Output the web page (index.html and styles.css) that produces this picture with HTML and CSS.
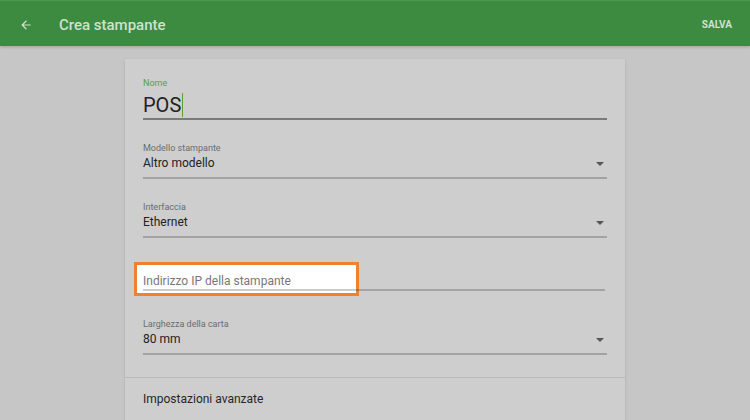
FILE: index.html
```html
<!DOCTYPE html>
<html lang="it">
<head>
    <meta charset="UTF-8">
    <meta name="viewport" content="width=device-width, initial-scale=1.0">
    <title>Crea stampante</title>
    <link rel="stylesheet" href="styles.css">
</head>
<body>
    <header class="toolbar">
        <span class="back">
            <svg width="14" height="14" viewBox="0 0 24 24"><path d="M20 11H7.83l5.59-5.59L12 4l-8 8 8 8 1.41-1.41L7.83 13H20v-2z" fill="currentColor"/></svg>
        </span>
        <h1>Crea stampante</h1>
        <span class="save">SALVA</span>
    </header>
    <main>
        <section class="card">
            <div class="fields">
                <div class="field field-name">
                    <label>Nome</label>
                    <div class="value">POS<span class="caret"></span></div>
                </div>
                <div class="field select">
                    <label>Modello stampante</label>
                    <div class="value">Altro modello<span class="arrow"></span></div>
                </div>
                <div class="field select">
                    <label>Interfaccia</label>
                    <div class="value">Ethernet<span class="arrow"></span></div>
                </div>
                <div class="field field-ip">
                    <span class="highlight"></span>
                    <div class="value placeholder">Indirizzo IP della stampante</div>
                </div>
                <div class="field select field-paper">
                    <label>Larghezza della carta</label>
                    <div class="value">80 mm<span class="arrow"></span></div>
                </div>
            </div>
            <div class="row">Impostazioni avanzate</div>
        </section>
    </main>
</body>
</html>
```

FILE: styles.css
```css
body {
    margin: 0;
    font-family: Roboto, "Noto Sans", sans-serif;
    background: #c6c6c6;
    height: 420px;
    overflow: hidden;
}
.toolbar {
    box-sizing: border-box;
    height: 46px;
    background: #3d8b40;
    border-top: 1px solid #4a9a4d;
    color: rgba(255, 255, 255, 0.75);
    display: flex;
    align-items: center;
    padding: 2px 18px 0 19px;
    box-shadow: 0 1px 3px rgba(0, 0, 0, 0.2);
}
.back {
    display: flex;
    width: 14px;
    height: 14px;
}
.toolbar h1 {
    flex: 1;
    margin: 0 0 0 26px;
    font-size: 15px;
    font-weight: 500;
}
.save {
    font-size: 10px;
    font-weight: 700;
}
main {
    padding-top: 13px;
}
.card {
    width: 500px;
    margin: 0 auto;
    padding-bottom: 2px;
    background: #cecece;
    box-shadow: 0 1px 3px rgba(0, 0, 0, 0.12);
}
.fields {
    padding: 18px 18px 22px;
}
.field {
    position: relative;
    margin-top: 22px;
}
.field:first-child {
    margin-top: 0;
}
.field label {
    display: block;
    font-size: 9px;
    line-height: 12px;
    color: #6c6c6c;
}
.field .value {
    position: relative;
    font-size: 12px;
    line-height: 16px;
    color: #222;
    padding: 1px 0 6px;
    border-bottom: 2px solid #a3a3a3;
}
.field-name label {
    color: #5e9e3a;
}
.field-name .value {
    font-size: 20px;
    line-height: 26px;
    padding: 3px 0 0;
    border-bottom-color: #7a7a7a;
}
.caret {
    display: inline-block;
    width: 1px;
    height: 24px;
    background: #5e9e3a;
    vertical-align: -5px;
    margin-left: 1px;
}
.arrow {
    position: absolute;
    right: 3px;
    top: 8px;
    border-left: 4px solid transparent;
    border-right: 4px solid transparent;
    border-top: 4px solid #555;
}
.field-ip {
    margin-top: 35px;
}
.field-ip .value {
    z-index: 1;
    font-size: 12px;
    color: #777;
    width: 462px;
    padding: 0;
    border-bottom: 2px solid rgba(0, 0, 0, 0.2);
}
.highlight {
    position: absolute;
    left: -9px;
    top: -11px;
    width: 219px;
    height: 28px;
    background: #fff;
    border: 3px solid #f0812f;
}
.field-paper {
    margin-top: 27px;
}
.row {
    border-top: 1px solid #bababa;
    border-bottom: 1px solid #bababa;
    padding: 13px 18px 13px;
    font-size: 12px;
    line-height: 16px;
    color: #262626;
}
```
